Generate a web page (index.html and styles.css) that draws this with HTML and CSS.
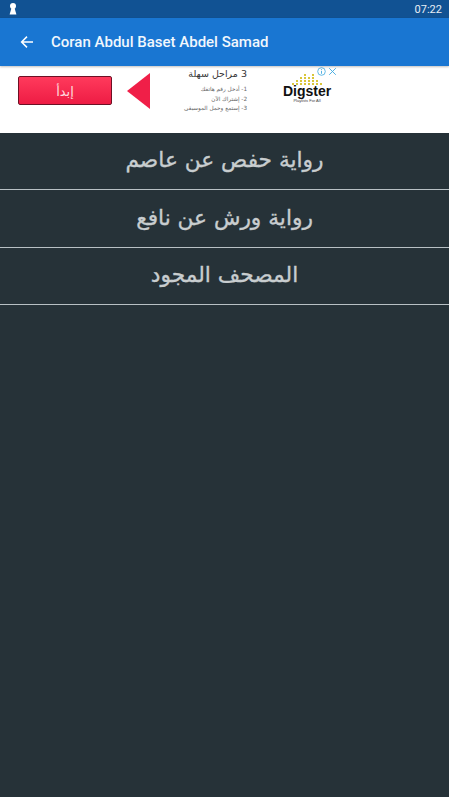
FILE: index.html
```
<!DOCTYPE html>
<html lang="en">
<head>
<meta charset="utf-8">
<title>Coran Abdul Baset Abdel Samad</title>
<link rel="stylesheet" href="styles.css">
</head>
<body>
<div class="status">
  <svg class="keyhole" width="8" height="12" viewBox="0 0 8 12"><circle cx="4" cy="3" r="3" fill="#fff"/><path d="M2.6 4.5h2.8L7.4 11.6H.6z" fill="#fff"/></svg>
  <span class="time">07:22</span>
</div>
<header class="appbar">
  <svg class="back" width="14" height="14" viewBox="0 0 14 14"><path d="M13 7H2M7 1.6 1.6 7 7 12.4" fill="none" stroke="#fff" stroke-width="1.5"/></svg>
  <span class="title">Coran Abdul Baset Abdel Samad</span>
</header>
<section class="ad">
  <div class="ad-btn" dir="rtl">إبدأ</div>
  <div class="ad-arrow"></div>
  <div class="ad-copy" dir="rtl">
    <div class="ad-head">3 مراحل سهلة</div>
    <div class="ad-line">1- أدخل رقم هاتفك</div>
    <div class="ad-line">2- إشتراك الآن</div>
    <div class="ad-line">3- إستمع وحمل الموسيقى</div>
  </div>
  <div class="logo">
    <svg class="dots" width="32" height="15" viewBox="0 0 32 15">
      <g fill="#d9c63a">
        <rect x="1" y="11" width="2" height="2"/><rect x="5" y="8" width="2" height="2"/><rect x="5" y="11" width="2" height="2"/>
        <rect x="9" y="5" width="2" height="2"/><rect x="9" y="8" width="2" height="2"/><rect x="9" y="11" width="2" height="2"/>
        <rect x="13" y="2" width="2" height="2"/><rect x="13" y="5" width="2" height="2"/><rect x="13" y="8" width="2" height="2"/><rect x="13" y="11" width="2" height="2"/>
        <rect x="17" y="5" width="2" height="2"/><rect x="17" y="8" width="2" height="2"/><rect x="17" y="11" width="2" height="2"/>
        <rect x="21" y="2" width="2" height="2"/><rect x="21" y="5" width="2" height="2"/><rect x="21" y="8" width="2" height="2"/><rect x="21" y="11" width="2" height="2"/>
        <rect x="25" y="8" width="2" height="2"/><rect x="25" y="11" width="2" height="2"/><rect x="29" y="11" width="2" height="2"/>
      </g>
    </svg>
    <div class="logo-name">Digster</div>
    <div class="logo-sub">Playlists For All</div>
  </div>
  <div class="ad-icons">
    <svg width="9" height="9" viewBox="0 0 9 9"><circle cx="4.5" cy="4.5" r="3.8" fill="none" stroke="#3fa9e0" stroke-width=".8"/><path d="M4.5 2.2v.9M4.5 3.9v2.9" stroke="#3fa9e0" stroke-width=".9"/></svg>
    <svg width="9" height="9" viewBox="0 0 9 9"><path d="M1.2 1.2 7.8 7.8M7.8 1.2 1.2 7.8" stroke="#3fa9e0" stroke-width=".9"/></svg>
  </div>
</section>
<main class="list" dir="rtl">
  <div class="row">رواية حفص عن عاصم</div>
  <div class="row tall">رواية ورش عن نافع</div>
  <div class="row">المصحف المجود</div>
</main>
</body>
</html>
```
FILE: styles.css
```
* { box-sizing: border-box; }
html, body { margin: 0; height: 100%; }
body {
  width: 449px;
  height: 797px;
  overflow: hidden;
  background: #263238;
  font-family: Roboto, "Liberation Sans", sans-serif;
  display: flex;
  flex-direction: column;
}
.status {
  height: 18px;
  background: #115293;
  display: flex;
  align-items: center;
  justify-content: space-between;
  padding: 0 7px 0 9px;
  flex: none;
}
.time { color: #e8eef5; font-size: 11px; }
.appbar {
  height: 48px;
  background: #1976d2;
  display: flex;
  align-items: center;
  padding-left: 20px;
  flex: none;
  position: relative;
  z-index: 1;
  box-shadow: 0 1px 2px rgba(0,0,0,.25);
}
.back { margin-right: 17px; }
.title { color: #f1f7fd; font-size: 15px; font-weight: 500; }
.ad {
  height: 67px;
  background: #fff;
  flex: none;
  display: flex;
  align-items: flex-start;
  position: relative;
}
.ad-btn {
  width: 94px;
  height: 29px;
  margin: 10px 0 0 18px;
  padding-top: 1px;
  background: linear-gradient(#ff3a5c, #ee1c44);
  border: 1px solid #6d1024;
  border-radius: 2px;
  color: #ffd9df;
  font: 13px "DejaVu Sans", sans-serif;
  display: flex;
  align-items: center;
  justify-content: center;
  flex: none;
}
.ad-arrow {
  width: 0;
  height: 0;
  margin: 7px 0 0 15px;
  border-style: solid;
  border-width: 18.5px 23px 18.5px 0;
  border-color: transparent #f01f48 transparent transparent;
  flex: none;
}
.ad-copy {
  width: 97px;
  margin-top: 1px;
  flex: none;
  font-family: "DejaVu Sans", sans-serif;
  text-align: right;
}
.ad-head { font-size: 9.5px; line-height: 14px; margin-bottom: 4px; color: #333; }
.ad-line { font-size: 5.7px; line-height: 9.7px; color: #666; }
.logo {
  width: 50px;
  margin: 6px 0 0 35px;
  flex: none;
  display: flex;
  flex-direction: column;
  align-items: center;
}
.dots { margin-bottom: -3px; }
.logo-name { font: 700 14px/14px "Liberation Sans", sans-serif; color: #111; }
.logo-sub { font: 4px/6px "Liberation Sans", sans-serif; color: #444; }
.ad-icons {
  position: absolute;
  top: 1px;
  left: 317px;
  display: flex;
  gap: 2px;
}
.list { flex: 1; background: #263238; }
.row {
  height: 57px;
  padding-bottom: 3px;
  color: #c8cdcf;
  font-family: "DejaVu Sans", sans-serif;
  font-size: 21.7px;
  -webkit-text-stroke: .35px #c8cdcf;
  border-bottom: 1px solid #b8c0c4;
  display: flex;
  align-items: center;
  justify-content: center;
}
.tall { height: 58px; }
```
